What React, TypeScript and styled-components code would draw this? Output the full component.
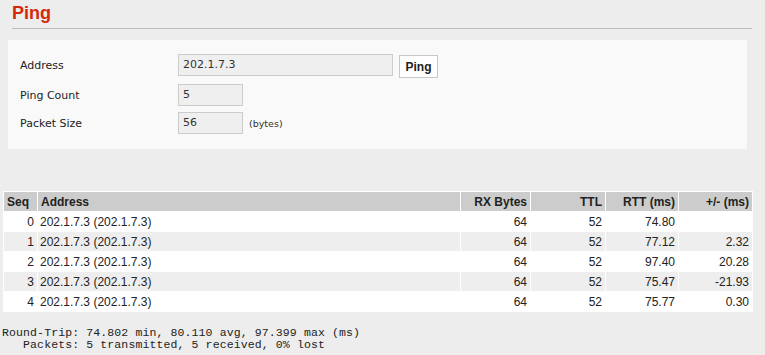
import React from "react";
import styled, { createGlobalStyle } from "styled-components";

const Global = createGlobalStyle`
  html, body { margin: 0; padding: 0; background: #ededed; }
  body { font-family: "DejaVu Sans", Tahoma, sans-serif; color: #222; }
`;

const Page = styled.div`
  width: 765px;
  padding-top: 3px;
  display: flex;
  flex-direction: column;
`;

const Title = styled.h2`
  margin: 0 0 0 12px;
  width: 740px;
  font-family: "Liberation Sans", Arial, sans-serif;
  font-weight: bold;
  font-size: 18px;
  line-height: 21px;
  color: #d42a0c;
  padding-bottom: 4px;
  border-bottom: 1px solid #bdbdbd;
`;

const Panel = styled.div`
  margin: 11px 0 0 8px;
  width: 739px;
  box-sizing: border-box;
  background: #f9f9f9;
  padding: 14px 0 13px 12px;
  display: grid;
  grid-template-columns: 158px 1fr;
  row-gap: 6px;
  align-items: start;
`;

const Label = styled.div<{ $h: number }>`
  font-size: 11px;
  height: ${(p) => p.$h}px;
  line-height: 24px;
  color: #222;
`;

const Field = styled.div`
  display: flex;
  align-items: flex-start;
  gap: 6px;
`;

const Input = styled.div<{ $w: number }>`
  width: ${(p) => p.$w}px;
  height: 22px;
  box-sizing: border-box;
  border: 1px solid #cccccc;
  background: #efefef;
  padding-left: 4px;
  font-size: 11px;
  line-height: 20px;
  color: #333;
`;

const Button = styled.button`
  margin-top: 1px;
  height: 23px;
  width: 39px;
  box-sizing: border-box;
  border: 1px solid #c8c8c8;
  background: #ffffff;
  font-family: "Liberation Sans", Arial, sans-serif;
  font-weight: bold;
  font-size: 12px;
  color: #222;
  padding: 0;
`;

const Unit = styled.span`
  font-size: 9.5px;
  line-height: 24px;
  color: #333;
`;

const Table = styled.table`
  margin: 42px 0 0 3px;
  width: 750px;
  table-layout: fixed;
  border-collapse: separate;
  border-spacing: 1px;
  background: #ffffff;
  font-family: "Liberation Sans", Arial, sans-serif;
  font-size: 12px;
  color: #222;
`;

const Th = styled.th<{ $right?: boolean }>`
  background: #cccccc;
  font-weight: bold;
  text-align: ${(p) => (p.$right ? "right" : "left")};
  height: 19px;
  padding: 0 3px;
  box-sizing: border-box;
`;

const Tr = styled.tr<{ $odd: boolean }>`
  background: ${(p) => (p.$odd ? "#eeeeee" : "#ffffff")};
`;

const Td = styled.td<{ $right?: boolean }>`
  text-align: ${(p) => (p.$right ? "right" : "left")};
  height: 19px;
  padding: 0 3px 0 2px;
  box-sizing: border-box;
  white-space: nowrap;
`;

const Summary = styled.pre`
  margin: 15px 0 0 2px;
  font-family: "Liberation Mono", "Courier New", monospace;
  font-size: 11.5px;
  letter-spacing: 0.12px;
  line-height: 12px;
  color: #222;
`;

const rows = [
  { seq: 0, rtt: "74.80", diff: "" },
  { seq: 1, rtt: "77.12", diff: "2.32" },
  { seq: 2, rtt: "97.40", diff: "20.28" },
  { seq: 3, rtt: "75.47", diff: "-21.93" },
  { seq: 4, rtt: "75.77", diff: "0.30" },
];

export default function App() {
  return (
    <>
      <Global />
      <Page>
        <Title>Ping</Title>
        <Panel>
          <Label $h={24}>Address</Label>
          <Field>
            <Input $w={215}>202.1.7.3</Input>
            <Button>Ping</Button>
          </Field>
          <Label $h={22}>Ping Count</Label>
          <Field>
            <Input $w={65}>5</Input>
          </Field>
          <Label $h={22}>Packet Size</Label>
          <Field>
            <Input $w={65}>56</Input>
            <Unit>(bytes)</Unit>
          </Field>
        </Panel>
        <Table>
          <colgroup>
            <col style={{ width: 33 }} />
            <col style={{ width: 422 }} />
            <col style={{ width: 69 }} />
            <col style={{ width: 74 }} />
            <col style={{ width: 72 }} />
            <col />
          </colgroup>
          <thead>
            <tr>
              <Th>Seq</Th>
              <Th>Address</Th>
              <Th $right>RX Bytes</Th>
              <Th $right>TTL</Th>
              <Th $right>RTT (ms)</Th>
              <Th $right>+/- (ms)</Th>
            </tr>
          </thead>
          <tbody>
            {rows.map((r, i) => (
              <Tr key={r.seq} $odd={i % 2 === 1}>
                <Td $right>{r.seq}</Td>
                <Td>202.1.7.3 (202.1.7.3)</Td>
                <Td $right>64</Td>
                <Td $right>52</Td>
                <Td $right>{r.rtt}</Td>
                <Td $right>{r.diff}</Td>
              </Tr>
            ))}
          </tbody>
        </Table>
        <Summary>{"Round-Trip: 74.802 min, 80.110 avg, 97.399 max (ms)\n   Packets: 5 transmitted, 5 received, 0% lost"}</Summary>
      </Page>
    </>
  );
}
